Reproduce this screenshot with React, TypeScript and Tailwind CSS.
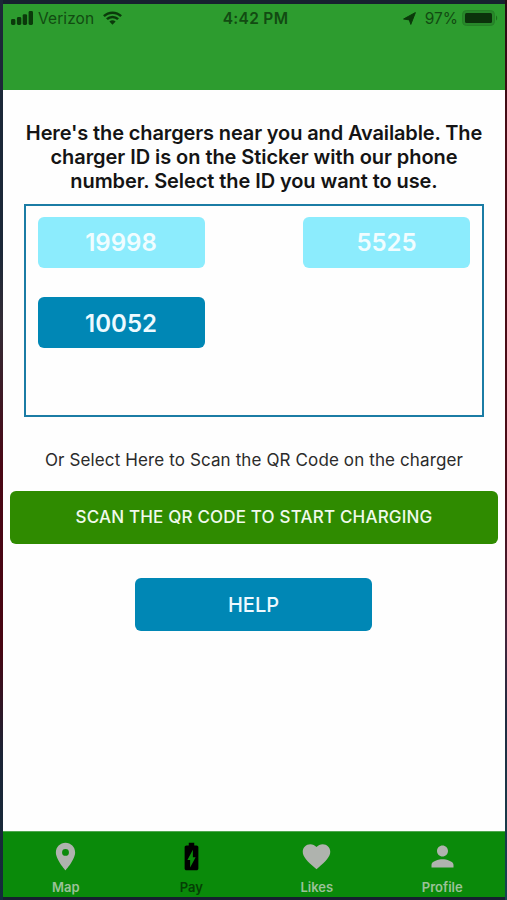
import { MdBatteryChargingFull, MdFavorite, MdLocationOn, MdPerson } from 'react-icons/md';

const CHARGERS = [
  { id: '19998', selected: false },
  { id: '5525', selected: false },
  { id: '10052', selected: true },
];

const TABS = [
  { icon: MdLocationOn, label: 'Map', active: false },
  { icon: MdBatteryChargingFull, label: 'Pay', active: true },
  { icon: MdFavorite, label: 'Likes', active: false },
  { icon: MdPerson, label: 'Profile', active: false },
];

function StatusBar() {
  return (
    <div className="grid grid-cols-3 items-center h-7 pl-2 pr-[7px] text-[15.5px] leading-5 text-[#124b12]">
      <div className="flex items-center">
        <svg width="22" height="14" viewBox="0 0 22 14" fill="#0b3a0b">
          <rect x="0" y="8" width="4.4" height="6" rx="1.4" />
          <rect x="5.9" y="6" width="4.4" height="8" rx="1.4" />
          <rect x="11.7" y="3.2" width="4.4" height="10.8" rx="1.4" />
          <rect x="17.6" y="0" width="4.4" height="14" rx="1.4" />
        </svg>
        <span className="ml-[5px] pt-px tracking-[0.1px]">Verizon</span>
        <svg className="ml-[9px] shrink-0" width="19" height="14" viewBox="0 0 19 14" fill="none" stroke="#0b3a0b" strokeWidth="2.5">
          <path d="M.9 5.1a12.4 12.4 0 0 1 17.2 0" />
          <path d="M3.9 8.2a8 8 0 0 1 11.2 0" />
          <path d="M9.5 13.7 6.4 10.6a4.5 4.5 0 0 1 6.2 0Z" fill="#0b3a0b" stroke="none" />
        </svg>
      </div>
      <span className="pl-[2px] pt-px text-center font-semibold tracking-[0.3px]">4:42 PM</span>
      <div className="flex items-center justify-end">
        <svg width="13" height="13" viewBox="0 0 13 13" fill="#0b3a0b" stroke="#0b3a0b" strokeWidth="1" strokeLinejoin="round">
          <path d="M12.4.6 7.8 12.4 6.3 7.9.6 7Z" />
        </svg>
        <span className="ml-[9px] pt-px">97%</span>
        <svg className="ml-1" width="36" height="16" viewBox="0 0 36 16">
          <rect x=".5" y=".5" width="32" height="15" rx="4" fill="#27872a" stroke="#257f26" />
          <rect x="3" y="3" width="27" height="10" rx="1.5" fill="#0b320b" />
          <path d="M34 5.5c1.6.8 1.6 4.2 0 5Z" fill="#1d6b1d" />
        </svg>
      </div>
    </div>
  );
}

function ChargerButton({ id, selected }: { id: string; selected: boolean }) {
  return (
    <button
      className={`h-[51px] w-[167px] rounded-md pt-[2px] text-[24px] font-semibold ${
        selected ? 'bg-[#0087b5] text-[#eefaff]' : 'bg-[#8cecfd] text-[#f1fdff]'
      }`}
    >
      {id}
    </button>
  );
}

function TabBar() {
  return (
    <nav className="grid h-[66px] shrink-0 grid-cols-4 border-t border-[#4fa750] bg-[#0a8a0a]">
      {TABS.map(({ icon: Icon, label, active }) => (
        <button
          key={label}
          className={`flex flex-col items-center pt-[8px] text-[13px] font-semibold leading-4 ${
            active ? 'text-black' : 'text-[#afb3ae]'
          }`}
        >
          <Icon size={33} />
          <span className={active ? 'mt-[6px] text-[#053f05]' : 'mt-[6px] text-[#9bc298]'}>{label}</span>
        </button>
      ))}
    </nav>
  );
}

export default function App() {
  return (
    <div className="flex h-[900px] w-[507px] bg-[#16212f] font-['Inter','Liberation_Sans',sans-serif]">
      <div className="w-[3px] shrink-0 bg-[linear-gradient(#1c2838,#1c2838_28%,#332c35_36%,#4a0715_52%,#480612_72%,#1b2436_84%,#142d3b)]" />

      <div className="flex min-w-0 flex-1 flex-col pt-1 pb-[3px]">
        <header className="h-[86px] shrink-0 bg-[#2d9c2f]">
          <StatusBar />
        </header>

        <main className="flex flex-1 flex-col items-center bg-[#fefefe]">
          <h1 className="mt-[31px] whitespace-nowrap text-center text-[20px] font-semibold leading-[24px] tracking-[-0.13px] text-[#141414]">
            Here's the chargers near you and Available. The
            <br />
            <span className="tracking-[-0.06px]">charger ID is on the Sticker with our phone</span>
            <br />
            <span className="tracking-[-0.08px]">number. Select the ID you want to use.</span>
          </h1>

          <section className="mt-[11px] flex h-[213px] w-[460px] flex-wrap content-start justify-between gap-y-[29.5px] border-[2.5px] border-[#1b7ca5] pl-[11.5px] pr-3 pt-[10.5px]">
            {CHARGERS.map((charger) => (
              <ChargerButton key={charger.id} {...charger} />
            ))}
          </section>

          <p className="mt-[31px] whitespace-nowrap text-[17px] leading-6 tracking-[0.12px] text-[#2b2b2b]">
            Or Select Here to Scan the QR Code on the charger
          </p>

          <button className="mt-[19px] h-[53px] w-[488px] rounded-md bg-[#2f8b00] pt-px text-[17px] font-medium tracking-[0.18px] text-[#f0faec]">
            SCAN THE QR CODE TO START CHARGING
          </button>

          <button className="mt-[34px] mr-px h-[53px] w-[237px] rounded-md bg-[#0087b5] text-[20px] font-medium text-[#effaff]">
            HELP
          </button>
        </main>

        <TabBar />
      </div>

      <div className="w-[2px] shrink-0 bg-[linear-gradient(#250c12,#4a0d16_15%,#4a0d18_55%,#45243a_70%,#1f2b40_80%,#124650)]" />
    </div>
  );
}
